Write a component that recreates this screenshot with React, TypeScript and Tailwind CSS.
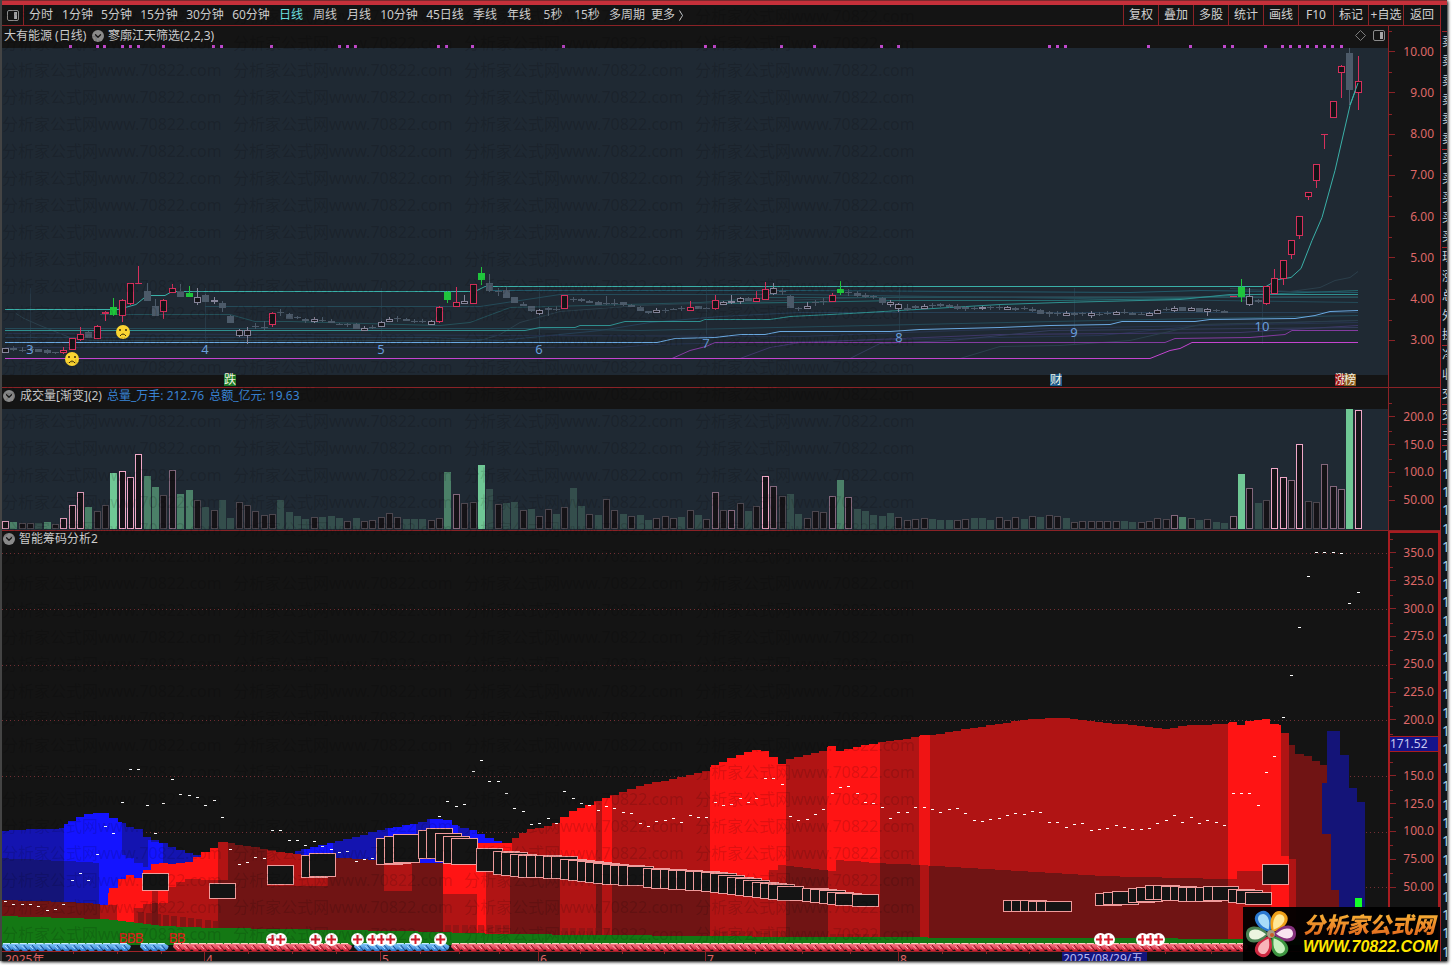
import React from "react";
import { ChevronDown } from "lucide-react";

type Point = [number, number];

const STEP = 8.352;
const barX = (i: number) => Math.floor(5.3 + i * STEP);

const PERIODS: { label: string; width: string }[] = [
  { label: "分时", width: "w-[34px]" },
  { label: "1分钟", width: "w-[39px]" },
  { label: "5分钟", width: "w-[39px]" },
  { label: "15分钟", width: "w-[46px]" },
  { label: "30分钟", width: "w-[46px]" },
  { label: "60分钟", width: "w-[46px]" },
  { label: "日线", width: "w-[34px]" },
  { label: "周线", width: "w-[34px]" },
  { label: "月线", width: "w-[34px]" },
  { label: "10分钟", width: "w-[46px]" },
  { label: "45日线", width: "w-[46px]" },
  { label: "季线", width: "w-[34px]" },
  { label: "年线", width: "w-[34px]" },
  { label: "5秒", width: "w-[34px]" },
  { label: "15秒", width: "w-[34px]" },
  { label: "多周期", width: "w-[46px]" },
];

const ACTIONS = ["复权", "叠加", "多股", "统计", "画线", "F10", "标记", "+自选", "返回"];

const QUOTE_KEYS = [
  "卖", "卖", "卖", "卖", "卖", "卖", "买", "买", "买", "买", "买",
  "现", "涨", "总", "外", "换", "净", "收", "交", "交", "主",
];

// ---- price panel ----------------------------------------------------------

// kind, high, top of body, bottom of body, low
type Candle = [string, number, number, number, number];

const CANDLES: Candle[] = [
  ["w", 348, 348, 352, 352], ["d", 346, 348, 350, 351], ["d", 347, 350, 351, 352],
  ["d", 346, 349, 350, 351], ["d", 349, 349, 352, 352], ["d", 349, 350, 353, 354],
  ["d", 352, 352, 353, 354], ["r", 347, 350, 352, 354], ["r", 338, 338, 349, 349],
  ["r", 327, 334, 339, 341], ["d", 331, 332, 338, 338], ["r", 325, 326, 338, 338],
  ["r", 311, 312, 313, 321], ["g", 298, 307, 315, 316], ["r", 299, 300, 315, 322],
  ["r", 283, 283, 303, 305], ["r", 266, 283, 283, 284], ["d", 283, 291, 301, 301],
  ["d", 299, 306, 316, 316], ["r", 299, 300, 311, 319], ["r", 284, 288, 292, 293],
  ["d", 284, 291, 297, 297], ["g", 286, 293, 297, 297], ["w", 288, 297, 302, 305],
  ["d", 294, 295, 302, 302], ["w", 297, 300, 301, 304], ["d", 301, 303, 308, 312],
  ["d", 315, 316, 323, 323], ["w", 329, 330, 335, 337], ["w", 327, 330, 335, 344],
  ["d", 323, 326, 327, 329], ["d", 321, 327, 328, 330], ["r", 312, 313, 324, 327],
  ["d", 309, 312, 313, 316], ["d", 313, 314, 319, 319], ["d", 316, 317, 318, 319],
  ["d", 318, 319, 321, 323], ["w", 317, 319, 321, 323], ["d", 317, 320, 321, 322],
  ["d", 319, 321, 323, 323], ["d", 323, 324, 325, 325], ["d", 323, 324, 325, 327],
  ["d", 323, 324, 329, 329], ["w", 326, 328, 330, 331], ["d", 325, 327, 328, 329],
  ["w", 321, 322, 326, 327], ["w", 317, 319, 321, 322], ["d", 316, 318, 319, 322],
  ["d", 318, 319, 321, 321], ["d", 319, 321, 322, 323], ["d", 319, 321, 322, 323],
  ["w", 320, 321, 324, 325], ["r", 306, 307, 321, 323], ["g", 291, 292, 300, 303],
  ["r", 287, 302, 306, 307], ["w", 295, 301, 303, 304], ["r", 284, 284, 303, 304],
  ["g", 267, 273, 280, 285], ["d", 274, 283, 291, 292], ["d", 288, 291, 292, 296],
  ["d", 287, 290, 298, 298], ["d", 297, 297, 303, 303], ["d", 302, 304, 306, 306],
  ["d", 306, 306, 311, 312], ["w", 309, 310, 313, 315], ["d", 307, 308, 310, 316],
  ["d", 306, 309, 310, 311], ["r", 295, 295, 308, 309], ["d", 297, 299, 300, 302],
  ["d", 298, 299, 301, 302], ["d", 300, 301, 303, 303], ["d", 301, 302, 305, 305],
  ["d", 296, 303, 304, 305], ["d", 299, 303, 304, 306], ["d", 302, 302, 305, 306],
  ["d", 304, 305, 307, 307], ["d", 306, 307, 311, 311], ["d", 311, 311, 313, 314],
  ["w", 308, 310, 312, 313], ["d", 308, 310, 311, 313], ["d", 308, 309, 310, 310],
  ["d", 306, 308, 309, 311], ["r", 301, 307, 310, 311], ["d", 306, 306, 309, 309],
  ["d", 307, 308, 309, 309], ["r", 295, 300, 308, 310], ["w", 301, 302, 304, 305],
  ["w", 295, 301, 302, 304], ["w", 297, 298, 301, 304], ["d", 297, 298, 301, 301],
  ["r", 291, 298, 301, 302], ["r", 282, 289, 299, 300], ["w", 283, 288, 293, 295],
  ["d", 288, 291, 292, 295], ["d", 295, 296, 308, 308], ["d", 307, 308, 309, 311],
  ["w", 302, 306, 308, 309], ["d", 300, 302, 303, 306], ["d", 298, 301, 302, 305],
  ["r", 293, 295, 301, 302], ["g", 281, 289, 293, 295], ["d", 289, 292, 293, 296],
  ["d", 291, 293, 296, 297], ["d", 293, 295, 297, 298], ["d", 295, 296, 297, 299],
  ["d", 297, 298, 303, 305], ["w", 300, 302, 304, 307], ["w", 303, 304, 308, 312],
  ["d", 304, 308, 310, 311], ["d", 305, 306, 308, 309], ["w", 304, 306, 308, 309],
  ["d", 303, 305, 306, 308], ["d", 303, 304, 306, 307], ["d", 304, 305, 307, 308],
  ["d", 304, 306, 309, 310], ["d", 306, 307, 309, 311], ["d", 306, 308, 309, 310],
  ["w", 306, 307, 308, 310], ["d", 306, 307, 308, 310],
  ["d", 305, 307, 308, 310], ["w", 306, 307, 309, 310], ["d", 307, 308, 310, 311],
  ["d", 306, 308, 309, 310], ["d", 307, 309, 311, 312], ["d", 309, 310, 314, 314],
  ["d", 311, 312, 314, 317], ["d", 311, 313, 314, 316], ["w", 311, 313, 315, 316],
  ["d", 312, 313, 315, 316], ["d", 312, 313, 314, 316], ["w", 311, 313, 315, 318],
  ["d", 312, 314, 315, 316], ["d", 311, 313, 314, 315], ["w", 311, 312, 314, 315],
  ["d", 309, 312, 313, 314], ["d", 312, 313, 315, 315], ["d", 312, 314, 315, 315],
  ["w", 312, 313, 315, 315], ["w", 309, 310, 313, 314], ["d", 307, 309, 310, 311],
  ["w", 306, 308, 310, 312], ["d", 307, 307, 311, 311], ["w", 307, 308, 310, 311],
  ["d", 308, 308, 312, 312], ["w", 308, 309, 311, 316], ["d", 309, 310, 311, 312],
  ["d", 310, 311, 313, 313], ["r", 296, 296, 296, 297], ["g", 279, 287, 297, 302],
  ["w", 288, 296, 304, 306], ["d", 299, 300, 302, 303], ["r", 286, 286, 303, 305],
  ["r", 269, 278, 293, 294], ["r", 260, 260, 278, 285], ["r", 240, 240, 254, 259],
  ["r", 216, 216, 235, 239], ["r", 192, 192, 196, 200], ["r", 164, 164, 180, 188],
  ["r", 134, 134, 134, 149], ["r", 101, 101, 117, 118], ["r", 65, 66, 72, 98],
  ["d", 48, 53, 90, 105], ["r", 56, 81, 92, 110],
];

const CANDLE_COLOR: Record<string, string> = {
  r: "#d6305c",
  w: "#86859a",
  d: "#4c5a69",
  g: "#1fc43c",
};

const INDICATORS: { color: string; points: string }[] = [
  { color: "#2b3f4b", points: "16,313 24,318 40,325 70,337 90,340 250,340 480,340 500,334 520,322 560,311 640,305 780,300 900,296 1358,296" },
  { color: "#263f55", points: "5,337 430,337 500,340 560,334 600,330 650,322 720,316 800,312 1358,312" },
  { color: "#244a58", points: "5,328 525,328 640,330 1100,320 1358,315" },
  { color: "#255059", points: "100,314 230,314 255,321 290,321 440,325 470,322 510,307 550,306 700,302 770,297 1358,297" },
  { color: "#244a58", points: "205,306 480,306 560,294 800,294 1358,302" },
  { color: "#28344f", points: "5,347 620,347 650,344 1100,335 1200,325 1358,320" },
  { color: "#28344f", points: "5,333 800,336 960,330 1100,327 1250,324 1358,322" },
  { color: "#3e3768", points: "740,358 770,347 800,342 1000,334 1240,332 1358,325" },
  { color: "#343c5c", points: "850,358 880,343 950,340 1050,330 1358,327" },
  { color: "#2b3f4b", points: "960,358 1000,346 1060,345 1130,340 1200,324 1358,320" },
  { color: "#256b70", points: "720,303 790,302 900,300 1060,300 1180,298 1230,295 1358,290" },
  { color: "#23596a", points: "490,290 800,290 1130,292 1200,290 1358,292" },
  { color: "#2b3f4b", points: "1230,288 1290,291 1320,287 1335,280 1350,277 1358,271" },
  { color: "#2f9090", points: "5,330 525,330 540,327 575,327 580,325 610,325 625,321 700,321 705,319 770,319 790,316 850,313 1000,304 1060,302 1180,299 1230,294 1358,294" },
  { color: "#843ba0", points: "672,358 690,350 706,346 715,342 1165,342 1175,338 1250,337 1285,334 1292,330 1358,330" },
  { color: "#c444d0", points: "5,358 1150,358 1170,350 1180,348 1192,342 1358,342" },
  { color: "#6aa8e0", points: "5,342 657,342 675,338 715,337 740,334 765,334 780,331 890,331 920,329 1000,327 1050,325 1110,324 1122,321 1195,321 1210,319 1295,318 1315,315 1330,311 1358,310" },
  { color: "#3ab0a8", points: "5,309 118,309 136,304 147,295 165,295 172,291 475,291 485,286 1266,286 1278,279 1291,277 1301,268 1312,240 1322,217 1335,170 1350,105 1358,83" },
];

const SIGNALS = [
  70, 97, 104, 122, 130, 138, 163, 213, 221, 271, 339, 347, 355, 438, 446, 472, 563, 705,
  714, 781, 814, 881, 898, 1049, 1057, 1065, 1148, 1190, 1224, 1232, 1265, 1282, 1290,
  1299, 1307, 1316, 1324, 1332, 1341,
];

const MONTHS: [string, number, number][] = [
  ["3", 30, 350], ["4", 205, 350], ["5", 381, 350], ["6", 539, 350],
  ["7", 706, 344], ["8", 899, 338], ["9", 1074, 333], ["10", 1262, 327],
];

const NEWS: [string, number, string][] = [
  ["跌", 230, "#1c7a26"], ["财", 1056, "#1c5a8c"], ["涨", 1341, "#9c1414"], ["榜", 1350, "#8a5a1c"],
];

// ---- volume panel ---------------------------------------------------------

// one token per bar: kind + top edge
const VOLUMES = (
  "p521 h522 w523 w523 g523 h522 w524 p518 p505 p492 h507 w511 w505 G473 P471 P477 P454 h476 h487 w495 " +
  "q470 h494 h490 w500 g507 w510 g500 g518 w502 w505 w511 w515 w514 g500 g512 g516 g519 w517 g517 g516 " +
  "g518 w521 g518 w521 w520 w517 w513 w517 g519 g519 g519 w520 w518 h472 q494 w503 w502 G465 g489 w504 " +
  "g503 g502 w510 g509 w516 w509 g514 w507 g488 g506 w514 g515 w499 w510 g514 w516 g515 g520 w518 w516 " +
  "w518 g517 w510 g515 w519 q492 w510 q510 w503 g511 w506 P476 q486 w496 g494 g514 w518 w511 w512 q496 " +
  "h480 q497 g509 g511 g515 g516 g513 w517 w520 w519 w518 g519 g520 g520 w520 w519 g518 g518 g520 w517 " +
  "w520 w517 g519 w516 g517 w515 w516 g518 w522 w521 w521 w521 w521 w521 g521 g522 w522 w521 w518 w519 " +
  "q515 h517 w518 g520 w519 g522 g523 q516 G474 q488 g503 w500 P468 P477 q480 P444 w501 w502 q464 q486 " +
  "q489 G409 P410"
).split(" ");

const VOLUME_COLOR: Record<string, string> = {
  P: "#f0a8c8",
  p: "#d898b4",
  q: "#83677c",
  w: "#4d474f",
  G: "#6fc795",
  h: "#4b8068",
  g: "#344e4c",
};

// ---- chip panel -----------------------------------------------------------

const COST = [
  901, 904, 904, 904, 906, 910, 909, 904, 880, 873, 880, 854, 826, 833, 802, 769, 769, 805,
  833, 803, 779, 794, 795, 797, 805, 800, 817, 849, 864, 862, 857, 858, 830, 830, 840, 840,
  845, 841, 846, 849, 852, 851, 861, 859, 858, 0, 0, 0, 0, 0, 0, 0, 816, 801, 806, 804, 771,
  760, 781, 781, 793, 808, 811, 824, 823, 818, 823, 791, 798, 803, 805, 810, 806, 808, 812,
  813, 823, 826, 821, 820, 818, 822, 815, 817, 817, 802, 805, 804, 798, 802, 798, 778, 778,
  784, 816, 820, 819, 814, 809, 793, 787, 786, 793, 802, 803, 807, 818, 812, 812, 807, 807,
  809, 812, 809, 808, 813, 820, 821, 819, 818, 815, 813, 814, 811, 812, 822, 822, 827, 824,
  823, 830, 829, 828, 825, 827, 829, 829, 828, 823, 820, 815, 822, 817, 823, 820, 822, 825,
  793, 793, 793, 805, 772, 756, 717, 675, 627, 576, 552, 552, 552, 553, 603, 592,
];

const BLUE = "#1414ff";
const BLUE_MID = "#1414b0";
const BLUE_DARK = "#141478";
const RED = "#ff1414";
const RED_MID = "#b01414";
const RED_DARK = "#701414";
const GREEN = "#147814";

const BLUE_TOP: Point[] = [
  [2, 831], [30, 829], [63, 829], [66, 824], [80, 817], [90, 813], [105, 813], [122, 823],
  [124, 826], [138, 828], [142, 835], [160, 842], [180, 850], [205, 858],
];
const BLUE_MAY: Point[] = [
  [295, 852], [310, 848], [330, 843], [350, 838], [370, 833], [385, 829], [400, 826],
  [425, 822], [432, 819], [446, 819], [456, 826], [476, 831], [490, 838], [500, 842], [510, 844],
];
const RED_RISE: Point[] = [
  [108, 893], [117, 885], [125, 875], [134, 875], [141, 879], [150, 866], [158, 862],
  [168, 864], [190, 862], [205, 852], [213, 848], [220, 848],
];
const RED_TOP: Point[] = [
  [220, 842], [228, 843], [260, 848], [290, 854], [345, 858], [384, 861], [440, 858],
  [480, 842], [506, 843], [512, 840], [527, 830], [553, 825], [560, 821], [568, 813],
  [587, 806], [602, 799], [627, 791], [647, 784], [673, 779], [706, 771], [712, 766],
  [727, 760], [743, 754], [753, 750], [763, 750], [773, 757], [782, 764], [788, 759],
  [811, 754], [824, 751], [828, 746], [836, 746], [841, 752], [850, 748], [870, 744],
  [900, 740], [919, 736], [945, 733], [980, 727], [1010, 722], [1045, 718], [1070, 718],
  [1100, 722], [1140, 726], [1166, 729], [1190, 725], [1226, 724], [1232, 722], [1240, 725],
  [1250, 721], [1262, 719], [1270, 719], [1275, 725], [1281, 725],
];
const RED_LOWER: Point[] = [
  [443, 893], [477, 894], [486, 870], [510, 868], [600, 872], [700, 880], [763, 883],
  [778, 865], [786, 865], [826, 870], [836, 860], [880, 863], [920, 865], [1000, 870],
  [1100, 876], [1228, 879], [1240, 871], [1271, 871],
];

interface Layer {
  color: string;
  from: number;
  to: number;
  top: Point[] | number;
  bottom?: number;
}

const LAYERS: Layer[] = [
  { color: BLUE_MID, from: 2, to: 205, top: BLUE_TOP },
  { color: BLUE_DARK, from: 2, to: 64, top: [[2, 858], [64, 861]] },
  { color: BLUE, from: 64, to: 122, top: BLUE_TOP },
  { color: BLUE_MID, from: 64, to: 99, top: [[64, 861], [99, 863]] },
  { color: BLUE, from: 122, to: 150, top: [[122, 854], [150, 869]] },
  { color: BLUE, from: 148, to: 163, top: [[148, 840], [163, 844]] },
  { color: RED_DARK, from: 2, to: 100, top: [[2, 900], [64, 902], [100, 904]] },
  { color: RED, from: 108, to: 220, top: RED_RISE },
  { color: RED_MID, from: 100, to: 117, top: 905 },
  { color: RED_MID, from: 134, to: 168, top: [[134, 911], [143, 904], [168, 903]] },
  { color: RED_MID, from: 152, to: 158, top: 890 },
  { color: RED_MID, from: 168, to: 220, top: [[168, 890], [185, 879], [220, 880]] },
  { color: BLUE_MID, from: 295, to: 512, top: BLUE_MAY },
  { color: BLUE, from: 304, to: 333, top: BLUE_MAY },
  { color: BLUE, from: 388, to: 416, top: BLUE_MAY },
  { color: BLUE, from: 430, to: 458, top: BLUE_MAY },
  { color: BLUE, from: 470, to: 502, top: BLUE_MAY },
  { color: RED_DARK, from: 218, to: 443, top: RED_TOP },
  { color: RED_MID, from: 218, to: 228, top: 842, bottom: 880 },
  { color: RED_MID, from: 267, to: 328, top: [[267, 850], [300, 854], [328, 857]], bottom: 886 },
  { color: RED_MID, from: 384, to: 412, top: 862, bottom: 891 },
  { color: BLUE, from: 418, to: 443, top: 850, bottom: 863 },
  { color: RED, from: 443, to: 477, top: 840 },
  { color: RED, from: 477, to: 512, top: 843 },
  { color: RED_MID, from: 512, to: 1228, top: RED_TOP },
  { color: RED, from: 560, to: 596, top: RED_TOP },
  { color: RED, from: 602, to: 612, top: RED_TOP },
  { color: RED, from: 710, to: 786, top: RED_TOP },
  { color: RED, from: 827, to: 880, top: RED_TOP },
  { color: "#f01414", from: 919, to: 930, top: RED_TOP },
  { color: RED, from: 1228, to: 1281, top: RED_TOP },
  { color: RED_MID, from: 443, to: 477, top: 894 },
  { color: RED_MID, from: 486, to: 510, top: 868 },
  { color: RED_DARK, from: 510, to: 560, top: RED_LOWER },
  { color: RED_MID, from: 560, to: 612, top: RED_LOWER },
  { color: RED_DARK, from: 596, to: 602, top: RED_LOWER },
  { color: RED_DARK, from: 612, to: 710, top: RED_LOWER },
  { color: RED_MID, from: 710, to: 786, top: RED_LOWER },
  { color: RED_DARK, from: 786, to: 828, top: RED_LOWER },
  { color: RED_MID, from: 836, to: 880, top: RED_LOWER },
  { color: RED_MID, from: 828, to: 836, top: 871 },
  { color: RED_DARK, from: 880, to: 1228, top: RED_LOWER },
  { color: RED_MID, from: 920, to: 929, top: RED_LOWER },
  { color: RED_MID, from: 1237, to: 1271, top: 871 },
  { color: RED_MID, from: 1228, to: 1237, top: 879 },
  { color: RED_MID, from: 1281, to: 1289, top: 733 },
  { color: RED, from: 1281, to: 1289, top: 856 },
  { color: RED_DARK, from: 1289, to: 1339, top: [[1289, 740], [1297, 753], [1310, 757], [1320, 764], [1339, 770]] },
  { color: RED_MID, from: 1289, to: 1296, top: 859 },
  { color: GREEN, from: 2, to: 1300, top: [[2, 916], [100, 919], [134, 922], [160, 926], [218, 928], [400, 931], [500, 934], [800, 937], [1300, 939]] },
];

// x, top, bottom at the ends of each run; runs are filled at bar spacing
const BOX_RUNS: [number, number, number][][] = [
  [[142, 873, 890]], [[209, 883, 898]], [[267, 865, 884]], [[301, 855, 877], [309, 853, 876]],
  [[376, 838, 864], [384, 836, 863], [392, 834, 862]],
  [[418, 830, 858], [426, 828, 858], [434, 833, 861], [443, 836, 863], [451, 838, 864]],
  [[476, 848, 871]],
  [
    [493, 851, 874], [518, 855, 877], [552, 856, 878], [560, 859, 879], [602, 864, 884],
    [627, 866, 885],
  ],
  [[643, 868, 887], [703, 872, 891], [743, 880, 896], [777, 886, 900]],
  [[802, 888, 901], [836, 893, 905]], [[852, 894, 906]],
  [[1003, 900, 911], [1043, 901, 911]],
  [[1095, 893, 905], [1111, 891, 904]],
  [[1128, 888, 902], [1145, 885, 899], [1186, 887, 901], [1212, 886, 900]],
  [[1228, 889, 902], [1245, 892, 904]], [[1262, 864, 884]],
];

const COIN_RUNS: [number, number, boolean][] = [
  [5, 128, false], [143, 166, false], [176, 349, true], [357, 446, false], [454, 1246, true],
];

const CROSSES = [272, 280, 315, 331, 357, 372, 381, 390, 415, 440, 1100, 1108, 1142, 1150, 1158];

const COMBS: [number, number][] = [[138, 218], [445, 510], [562, 612], [714, 782], [830, 880]];

function interpolate(points: Point[], x: number) {
  if (x <= points[0][0]) return points[0][1];
  for (let i = 1; i < points.length; i++) {
    const [x1, y1] = points[i];
    if (x <= x1) {
      const [x0, y0] = points[i - 1];
      return Math.round(y0 + ((y1 - y0) * (x - x0)) / (x1 - x0));
    }
  }
  return points[points.length - 1][1];
}

function layerPath({ from, to, top, bottom = 946 }: Layer) {
  if (typeof top === "number") return `M${from} ${bottom}V${top}H${to}V${bottom}Z`;
  let d = `M${from} ${bottom}`;
  for (let i = 0; barX(i) - 4 < to; i++) {
    const left = Math.max(barX(i) - 4, from);
    const right = Math.min(barX(i + 1) - 4, to);
    if (right <= from) continue;
    d += `H${left}V${interpolate(top, (left + right) / 2)}H${right}`;
  }
  return `${d}V${bottom}Z`;
}

function expandRun(run: [number, number, number][]) {
  const last = run[run.length - 1][0];
  const tops: Point[] = run.map(([x, t]) => [x, t]);
  const bottoms: Point[] = run.map(([x, , b]) => [x, b]);
  const boxes: { x: number; top: number; bottom: number }[] = [];
  for (let x = run[0][0]; x <= last + 2; x += STEP) {
    boxes.push({ x: Math.round(x), top: interpolate(tops, x), bottom: interpolate(bottoms, x) });
  }
  return boxes;
}

const CollapseButton = ({ label }: { label: string }) => (
  <button
    aria-label={label}
    className="flex h-3 w-3 shrink-0 items-center justify-center rounded-full bg-[#8a8a8a] text-[#141414]"
  >
    <ChevronDown size={10} strokeWidth={3} />
  </button>
);

const DockIcon = () => (
  <svg width="12" height="11" viewBox="0 0 12 11" aria-hidden="true">
    <rect x="0.5" y="0.5" width="11" height="10" rx="1.5" fill="none" stroke="#8c8c8c" />
    <rect x="7" y="2" width="3" height="7" fill="#a8a8a8" />
  </svg>
);

const Toolbar = () => (
  <nav className="flex h-[21px] items-stretch border-b border-[#8a2226] text-[#d0d0d0]">
    <button aria-label="侧栏" className="flex w-[22px] shrink-0 items-center justify-center border-r border-[#8a2226]">
      <DockIcon />
    </button>
    {PERIODS.map(({ label, width }) => (
      <button
        key={label}
        className={`${width} shrink-0 whitespace-nowrap text-center ${label === "日线" ? "text-[#6fe3e6]" : ""}`}
      >
        {label}
      </button>
    ))}
    <button className="flex shrink-0 items-center whitespace-nowrap pl-px">
      更多
      <svg width="12" height="11" viewBox="0 0 12 11" aria-hidden="true">
        <path d="M4.500 0.500L7.500 5.500L4.500 10.500" fill="none" stroke="#d0d0d0" />
      </svg>
    </button>
    <div className="ml-auto flex items-stretch">
      {ACTIONS.map((label) => (
        <button
          key={label}
          className="w-[35px] shrink-0 whitespace-nowrap border-l border-[#8a2226] text-center last:w-[37px]"
        >
          {label}
        </button>
      ))}
    </div>
  </nav>
);

interface AxisProps {
  labels: string[];
  className: string;
}

const Axis: React.FC<AxisProps> = ({ labels, className }) => (
  <div className={`flex flex-col text-[#de6868] ${className}`}>
    {labels.map((label, index) => (
      <div
        key={index}
        className="relative flex flex-1 items-center justify-between before:absolute before:left-0 before:top-0 before:h-px before:w-[3px] before:bg-[#8a2226]"
      >
        <span className="h-px w-[6px] bg-[#8a2226]" />
        <span>{label}</span>
      </div>
    ))}
  </div>
);

const SadFace = ({ x, y }: { x: number; y: number }) => (
  <g>
    <circle cx={x} cy={y} r="7" fill="#fbd431" />
    <circle cx={x - 3} cy={y - 2} r="1" fill="#3a2a08" />
    <circle cx={x + 3} cy={y - 2} r="1" fill="#3a2a08" />
    <path d={`M${x - 3} ${y + 4}q3 -4 6 0`} fill="none" stroke="#3a2a08" />
  </g>
);

const PriceChart = () => (
  <svg viewBox="2 45 1386 342" preserveAspectRatio="none" className="block h-[342px] w-full" role="img" aria-label="日线">
    <rect x="2" y="48" width="1386" height="327" fill="#1f2933" />
    {SIGNALS.map((x) => (
      <rect key={x} x={x - 1} y="45" width="3" height="3" fill="#c048cc" />
    ))}
    {MONTHS.map(([label, x]) => (
      <rect key={label} x={x} y="288" width="1" height="56" fill="#273946" />
    ))}
    <g fill="none" transform="translate(0 .5)">
      {INDICATORS.map(({ color, points }, index) => (
        <polyline key={index} points={points} stroke={color} />
      ))}
    </g>
    <g shapeRendering="crispEdges">
      {CANDLES.map(([kind, high, top, bottom, low], index) => {
        const x = barX(index);
        const color = CANDLE_COLOR[kind];
        const hollow = kind === "r" || kind === "w";
        return (
          <g key={index}>
            <rect x={x} y={high} width="1" height={low - high} fill={color} />
            <rect x={x - 3} y={top} width="7" height={Math.max(bottom - top + (hollow ? 1 : 0), 1)} fill={color} />
            {hollow && bottom - top > 1 && (
              <rect x={x - 2} y={top + 1} width="5" height={bottom - top - 1} fill="#151418" />
            )}
          </g>
        );
      })}
    </g>
    <polyline points="1350,105 1358,83" stroke="#3ab0a8" fill="none" />
    <g fontSize="13" fill="#6a9fdc" textAnchor="middle">
      {MONTHS.map(([label, x, y]) => (
        <text key={label} x={x} y={y + 4}>{label}</text>
      ))}
    </g>
    <SadFace x={72} y={359} />
    <SadFace x={123} y={332} />
    <g fontSize="12" fill="#f0f0e0" textAnchor="middle">
      {NEWS.map(([label, x, color]) => (
        <g key={label}>
          <rect x={x - 6} y="374" width="12" height="12" fill={color} />
          <text x={x} y="384">{label}</text>
        </g>
      ))}
    </g>
  </svg>
);

const VolumeChart = () => (
  <svg viewBox="2 409 1386 121" preserveAspectRatio="none" className="block h-[121px] w-full bg-[#1f2933]" role="img" aria-label="成交量">
    <g shapeRendering="crispEdges">
      {VOLUMES.map((token, index) => {
        const kind = token[0];
        const top = Number(token.slice(1));
        const x = barX(index) - 3;
        const solid = "Ggh".includes(kind);
        return (
          <g key={index}>
            <rect x={x} y={top} width="7" height={529 - top} fill={VOLUME_COLOR[kind]} />
            {!solid && <rect x={x + 1} y={top + 1} width="5" height={527 - top} fill="#151317" />}
          </g>
        );
      })}
    </g>
  </svg>
);

const ChipChart = () => (
  <svg viewBox="2 547 1386 404" preserveAspectRatio="none" className="block h-[404px] w-full" role="img" aria-label="智能筹码分析">
    <defs>
      <linearGradient id="bead-blue" x1="0" y1="0" x2="0" y2="1">
        <stop offset="0" stopColor="#8cd0ff" />
        <stop offset="1" stopColor="#2a78d0" />
      </linearGradient>
      <linearGradient id="bead-red" x1="0" y1="0" x2="0" y2="1">
        <stop offset="0" stopColor="#ff8a94" />
        <stop offset="1" stopColor="#d01c34" />
      </linearGradient>
    </defs>
    <g stroke="#743034" strokeDasharray="1 3">
      {[553, 609, 665, 720, 776, 832, 887].map((y) => (
        <line key={y} x1="2" x2="1388" y1={y + 0.5} y2={y + 0.5} />
      ))}
    </g>
    <g shapeRendering="crispEdges">
      {LAYERS.map((layer, index) => (
        <path key={index} d={layerPath(layer)} fill={layer.color} />
      ))}
      {COMBS.map(([from, to], run) =>
        Array.from({ length: Math.floor((to - from) / STEP) + 1 }, (_, i) => (
          <rect
            key={`${run}-${i}`}
            x={Math.round(from + i * STEP)}
            y={run === 0 ? 912 + i : 922 + run * 3}
            width="6"
            height={run === 0 ? 13 : 8}
            fill="#7c1414"
            opacity={run === 0 ? 0.8 : 0.5}
          />
        ))
      )}
      <path d={layerPath(LAYERS[LAYERS.length - 1])} fill={GREEN} />
      <rect x="152" y="903" width="6" height="22" fill={RED_DARK} />
      <path d="M1322 783H1327V731H1340V755H1349V788H1357V802H1365V946H1339V890H1331V834H1322Z" fill={BLUE_DARK} />
      <rect x="1355" y="898" width="7" height="12" fill="#14ff28" />
    </g>
    <g fill="#141414" stroke="#f09c9c">
      {BOX_RUNS.flatMap(expandRun).map(({ x, top, bottom }) => (
        <rect key={x} x={x + 0.5} y={top + 0.5} width="26" height={bottom - top} />
      ))}
    </g>
    <g fill="#ffffff" shapeRendering="crispEdges">
      {COST.map((y, index) => y > 0 && <rect key={index} x={barX(index) - 1} y={y} width="3" height="1" />)}
    </g>
    <rect x="2" y="945" width="1386" height="6" fill="#141414" />
    {COIN_RUNS.map(([from, to, hot]) =>
      Array.from({ length: Math.floor((to - from) / STEP) + 1 }, (_, i) => {
        const x = from + i * STEP;
        return (
          <g key={`${from}-${i}`}>
            <path
              d={`M${x - 2} 943h6l5 3l-1 3l-3 2h-4l-4 -4z`}
              fill={hot ? "url(#bead-red)" : "url(#bead-blue)"}
            />
            <path d={`M${x - 2} 943.500h7`} stroke={hot ? "#ffd0c8" : "#c8ecff"} />
            <path d={`M${x} 946l3 3`} stroke={hot ? "#ffb0b8" : "#b0dcff"} />
            <path d={`M${x + 2} 945l4 5`} stroke={hot ? "#7c1424" : "#1c4c8c"} />
          </g>
        );
      })
    )}
    <g fontSize="14" fill="#e0201c" textAnchor="middle">
      {[123, 131, 139, 173, 181].map((x) => (
        <text key={x} x={x} y="943">B</text>
      ))}
    </g>
    {CROSSES.map((x) => (
      <g key={x}>
        <circle cx={x + 0.5} cy="939.500" r="6.500" fill="#ffffff" />
        <path d={`M${x - 4} 939.500h9M${x + 0.5} 935v9`} stroke="#d81c2c" strokeWidth="2" />
      </g>
    ))}
  </svg>
);

const TimeAxis = () => (
  <svg viewBox="2 952 1386 9" preserveAspectRatio="none" className="block h-[9px] w-full" role="img" aria-label="日期">
    <g fill="#8a2226">
      {[73, 117, 161, 248, 292, 336, 420, 459, 499, 580, 622, 664, 755, 802, 850, 942, 986, 1029, 1165, 1211].map((x) => (
        <rect key={x} x={x} y="952" width="1" height="2" />
      ))}
      {[204, 380, 538, 705, 898].map((x) => (
        <rect key={x} x={x} y="952" width="1" height="9" />
      ))}
    </g>
    <g fontSize="12" fill="#e06464">
      <text x="5" y="964">2025年</text>
      <text x="206" y="964">4</text>
      <text x="382" y="964">5</text>
      <text x="540" y="964">6</text>
      <text x="707" y="964">7</text>
      <text x="900" y="964">8</text>
    </g>
    <rect x="1062" y="952" width="85" height="9" fill="#14147c" />
    <text x="1063" y="963" fontSize="12" fill="#b8b8f4">2025/08/29/五</text>
  </svg>
);

const PETALS: { angle: number; outer: string; inner: string }[] = [
  { angle: -28, outer: "#2a78d0", inner: "#a8dcf8" },
  { angle: 30, outer: "#f0a018", inner: "#ffe898" },
  { angle: 88, outer: "#84307c", inner: "#f8e4f0" },
  { angle: 148, outer: "#3c9440", inner: "#c8f0c0" },
  { angle: 208, outer: "#cc2840", inner: "#f8b4b8" },
  { angle: 268, outer: "#4c8454", inner: "#ecf4e0" },
];

const SiteLogo = () => (
  <a
    href="#home"
    className="absolute bottom-0 right-0 flex h-[54px] w-[197px] items-center bg-black/95 pl-[2px]"
  >
    <svg width="52" height="52" viewBox="-26 -26 52 52" className="shrink-0" aria-hidden="true">
      {PETALS.map(({ angle, outer, inner }) => (
        <g key={angle} transform={`rotate(${angle})`}>
          <path d="M0 -2C-5 -7 -8 -11 -8 -17C-8 -22 -5 -25 0 -25S8 -22 8 -17C8 -11 5 -7 0 -2Z" fill={outer} />
          <path d="M0 -5C-3 -9 -5 -12 -5 -16C-5 -20 -3 -22 0 -22S5 -20 5 -16C5 -12 3 -9 0 -5Z" fill={inner} />
        </g>
      ))}
      <circle r="4" fill="#a89c84" />
      <circle cx="1" cy="1" r="2" fill="#c85c28" />
    </svg>
    <span className="flex flex-col pl-[6px]">
      <span className="whitespace-nowrap bg-gradient-to-b from-[#f8b838] to-[#e0641c] bg-clip-text text-[22px] font-black italic leading-[26px] text-transparent">
        分析家公式网
      </span>
      <span className="font-['Liberation_Sans',sans-serif] text-[16px] font-bold italic leading-[20px] text-[#ffe600]">
        WWW.70822.COM
      </span>
    </span>
  </a>
);

const Watermark = () => (
  <div aria-hidden="true" className="pointer-events-none absolute inset-0 overflow-hidden pt-[2px] text-[16px] text-black/15">
    {Array.from({ length: 35 }, (_, row) => (
      <div key={row} className="flex h-[27px] items-center">
        {Array.from({ length: 4 }, (_, col) => (
          <span key={col} className="w-[231px] shrink-0 whitespace-nowrap">
            分析家公式网www.70822.com
          </span>
        ))}
      </div>
    ))}
  </div>
);

const QuoteStrip = () => (
  <aside className="relative w-[7px] shrink-0 border-l border-[#a02428] bg-[#10161b]">
    <div className="absolute inset-0 flex flex-col overflow-hidden pl-px pt-[26px] text-[#c8d4dc]">
      <div className="flex h-[414px] shrink-0 flex-col">
        {QUOTE_KEYS.map((key, index) => (
          <span
            key={index}
            className={`flex w-3 flex-1 items-center ${[0, 6, 11, 16, 19, 20].includes(index) ? "border-t border-[#a02428]" : ""}`}
          >
            {key}
          </span>
        ))}
      </div>
      <div className="flex flex-1 flex-col border-t border-[#a02428] text-[14px] text-[#a8d0e8]">
        {Array.from({ length: 28 }, (_, index) => (
          <span key={index} className="flex w-3 flex-1 items-center">
            1
          </span>
        ))}
      </div>
    </div>
  </aside>
);

export default function App() {
  return (
    <div className="bg-white pb-1 pr-[6px] font-['Noto_Sans','Noto_Sans_CJK_SC',sans-serif] text-[12px] leading-none">
      <div className="relative border-l-2 border-[#444444] bg-[#141414] shadow-[1px_1px_3px_#000000]">
        <div className="h-[5px] border-t border-[#7c2a2e] bg-[#c5303a]" />
        <div className="flex">
          <main className="relative min-w-0 flex-1">
            <Toolbar />

            <section className="flex border-b border-[#8a2226]">
              <div className="min-w-0 flex-1">
                <header className="flex h-[19px] items-center gap-[4px] pl-[2px] pr-[3px] text-[#cccccc]">
                  <h1 className="w-[84px] whitespace-nowrap">大有能源 (日线)</h1>
                  <CollapseButton label="收起主图" />
                  <h2 className="whitespace-nowrap">寥廓江天筛选(2,2,3)</h2>
                  <span className="ml-auto flex items-center gap-[7px]">
                    <svg width="11" height="11" viewBox="0 0 11 11" aria-hidden="true">
                      <path d="M5.500 0.500L10.500 5.500L5.500 10.500L0.500 5.500Z" fill="none" stroke="#7c7c7c" />
                    </svg>
                    <DockIcon />
                  </span>
                </header>
                <PriceChart />
              </div>
              <div className="w-[52px] shrink-0 border-l border-[#8a2226]">
                <Axis
                  className="mt-[5px] h-[330px] pr-[6px]"
                  labels={["10.00", "9.00", "8.00", "7.00", "6.00", "5.00", "4.00", "3.00"]}
                />
              </div>
            </section>

            <section className="flex border-b border-[#8a2226]">
              <div className="min-w-0 flex-1">
                <header className="flex h-[21px] items-center gap-[5px] pb-[5px] pl-px text-[#cccccc]">
                  <CollapseButton label="收起成交量" />
                  <h2 className="whitespace-nowrap">成交量[渐变](2)</h2>
                  <span className="whitespace-nowrap text-[#3a86d8]">总量_万手: 212.76</span>
                  <span className="whitespace-nowrap text-[#3a86d8]">总额_亿元: 19.63</span>
                </header>
                <VolumeChart />
              </div>
              <div className="w-[52px] shrink-0 border-l border-[#8a2226]">
                <Axis className="mt-[15px] h-[111px] pr-[6px]" labels={["200.0", "150.0", "100.0", "50.00"]} />
              </div>
            </section>

            <section className="flex">
              <div className="min-w-0 flex-1">
                <header className="flex h-[16px] items-center gap-[4px] pl-px text-[#cccccc]">
                  <CollapseButton label="收起筹码分析" />
                  <h2 className="whitespace-nowrap">智能筹码分析2</h2>
                </header>
                <ChipChart />
                <div className="border-t border-[#a02428]">
                  <TimeAxis />
                </div>
              </div>
              <div className="relative w-[52px] shrink-0 border-2 border-b-0 border-[#a81c20]">
                <Axis
                  className="mt-[6px] h-[362px] pr-[4px]"
                  labels={[
                    "350.0", "325.0", "300.0", "275.0", "250.0", "225.0", "200.0", "",
                    "150.0", "125.0", "100.0", "75.00", "50.00",
                  ]}
                />
                <span className="absolute inset-x-0 top-[203px] flex h-[16px] items-center border-y border-[#a81c20] bg-[#14148c] text-[#c8c8f0]">
                  171.52
                </span>
              </div>
            </section>

            <SiteLogo />
          </main>
          <QuoteStrip />
        </div>
        <Watermark />
      </div>
    </div>
  );
}
